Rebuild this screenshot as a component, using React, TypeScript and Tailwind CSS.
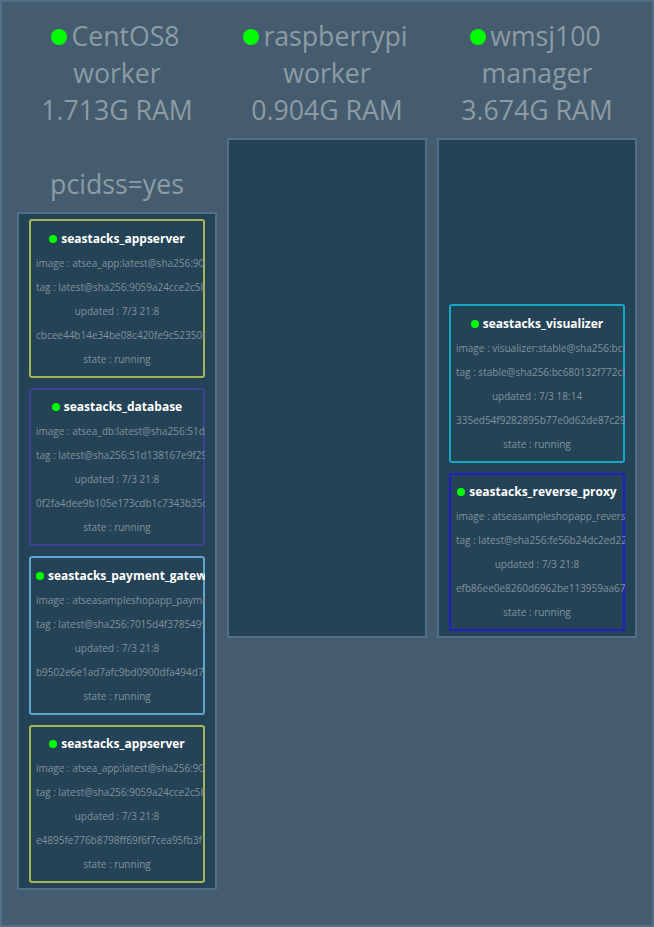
type Task = {
  name: string;
  image: string;
  tag: string;
  updated: string;
  id: string;
  border: string;
};

type Node = { name: string; role: string; ram: string; label?: string; tasks: Task[] };

const nodes: Node[] = [
  {
    name: "CentOS8",
    role: "worker",
    ram: "1.713G RAM",
    label: "pcidss=yes",
    tasks: [
      { name: "seastacks_appserver", image: "atsea_app:latest@sha256:9059a", tag: "latest@sha256:9059a24cce2c5b1", updated: "7/3 21:8", id: "cbcee44b14e34be08c420fe9c52350c1", border: "border-[#a4b850]" },
      { name: "seastacks_database", image: "atsea_db:latest@sha256:51d13", tag: "latest@sha256:51d138167e9f29a", updated: "7/3 21:8", id: "0f2fa4dee9b105e173cdb1c7343b35c1", border: "border-[#3d4290]" },
      { name: "seastacks_payment_gateway", image: "atseasampleshopapp_payment", tag: "latest@sha256:7015d4f3785495a", updated: "7/3 21:8", id: "b9502e6e1ad7afc9bd0900dfa494d7a", border: "border-[#5fa6ca]" },
      { name: "seastacks_appserver", image: "atsea_app:latest@sha256:9059a", tag: "latest@sha256:9059a24cce2c5b1", updated: "7/3 21:8", id: "e4895fe776b8798ff69f6f7cea95fb3f1", border: "border-[#a4b850]" },
    ],
  },
  { name: "raspberrypi", role: "worker", ram: "0.904G RAM", tasks: [] },
  {
    name: "wmsj100",
    role: "manager",
    ram: "3.674G RAM",
    tasks: [
      { name: "seastacks_visualizer", image: "visualizer:stable@sha256:bc6", tag: "stable@sha256:bc680132f772cb", updated: "7/3 18:14", id: "335ed54f9282895b77e0d62de87c29a", border: "border-[#18a7c4]" },
      { name: "seastacks_reverse_proxy", image: "atseasampleshopapp_reverse", tag: "latest@sha256:fe56b24dc2ed22a", updated: "7/3 21:8", id: "efb86ee0e8260d6962be113959aa67a", border: "border-[#211dcd]" },
    ],
  },
];

function Line({ children }: { children: string }) {
  return <div className="mx-auto w-fit min-w-full text-center">{children}</div>;
}

function TaskCard({ task }: { task: Task }) {
  return (
    <div className="h-[158.5px] w-44 shrink-0 overflow-hidden">
      <div className={`h-full rounded-[3px] border-2 p-[5px] text-[10px] leading-6 whitespace-nowrap text-[#80929c] ${task.border}`}>
        <div className="mx-auto flex h-[24.5px] w-fit min-w-full items-end justify-center gap-1 text-xs leading-6 font-bold text-white">
          <span className="mb-2 size-2 shrink-0 rounded-full bg-[#00ff00]" />
          <span className="leading-6">{task.name}</span>
        </div>
        <Line>{`image : ${task.image}`}</Line>
        <Line>{`tag : ${task.tag}`}</Line>
        <Line>{`updated : ${task.updated}`}</Line>
        <Line>{task.id}</Line>
        <Line>state : running</Line>
      </div>
    </div>
  );
}

export default function App() {
  return (
    <main className="flex h-[927px] w-[654px] items-start gap-2.5 border-2 border-[#517087] bg-[#455c6e] px-[15px] pt-[15px] font-['Open_Sans',sans-serif]">
      {nodes.map((node) => (
        <section key={node.name} className="w-[200px] shrink-0">
          <header className="text-center text-[26.67px] leading-[37px] whitespace-nowrap text-[#8d9ba5]">
            <div className="flex items-center justify-center gap-1 pr-[3px]">
              <span className="mt-0.5 size-4 rounded-full bg-[#00ff00]" />
              <span>{node.name}</span>
            </div>
            <div>{node.role}</div>
            <div>{node.ram}</div>
            {node.label && <div className="pt-[37px]">{node.label}</div>}
          </header>
          <div className="mt-2.5 flex min-h-[500px] flex-col justify-end gap-2.5 border-2 border-[#517087] bg-[#254356] px-2.5 py-[5px]">
            {node.tasks.map((task) => (
              <TaskCard key={task.id} task={task} />
            ))}
          </div>
        </section>
      ))}
    </main>
  );
}
